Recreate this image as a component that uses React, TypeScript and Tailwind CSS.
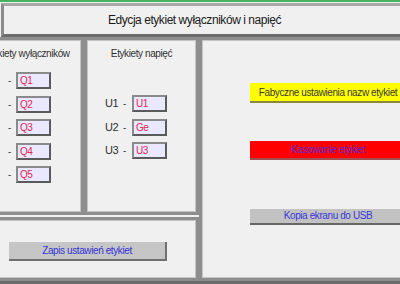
export default function App() {
  const qLabels = ['Q1', 'Q2', 'Q3', 'Q4', 'Q5']
  const uRows = [
    { name: 'U1', value: 'U1' },
    { name: 'U2', value: 'Ge' },
    { name: 'U3', value: 'U3' },
  ]

  return (
    <div className="w-[400px] h-[284px] overflow-hidden bg-[#f0f0f0] flex flex-col font-['Liberation_Sans',Arial,sans-serif] text-[#303030]">
      {/* top status strip */}
      <div className="h-[2px] shrink-0 bg-[#46b45e]" />

      {/* title */}
      <div className="mt-px ml-[1px] -mr-[10px] h-[34px] shrink-0 flex items-center border-[3px] border-t-[#a8a8a8] border-l-[#8c8c8c] border-b-[#6c6c6c] border-r-[#6c6c6c] bg-[#f0f0f0]">
        <div className="pl-[104px] text-[12px] tracking-[-0.45px] whitespace-nowrap text-[#1a1a1a]">
          Edycja etykiet wyłączników i napięć
        </div>
      </div>

      <div className="flex flex-1 min-h-0">
        {/* left column */}
        <div className="-ml-[30px] w-[229px] shrink-0 flex flex-col">
          <div className="flex h-[178px] shrink-0">
            {/* breakers */}
            <div className="w-[114px] border-[3px] border-[#8e8e8e] shadow-[inset_0_0_0_1px_#c4c4c4] flex flex-col items-center pt-[7px]">
              <div className="text-[10px] leading-[13px] tracking-[-0.4px] whitespace-nowrap text-[#303030]">
                Etykiety wyłączników
              </div>
              <div className="mt-[12px] w-full flex flex-col gap-[6.5px] pl-[35px]">
                {qLabels.map((q) => (
                  <div key={q} className="flex items-center h-[17px]">
                    <span className="w-[8px] text-[10px] text-[#404040]">-</span>
                    <div className="w-[35px] h-[17px] border-2 border-t-[#8a8a8a] border-l-[#8a8a8a] border-b-[#5a5a5a] border-r-[#5a5a5a] bg-[#e9e8ff] pl-[2px] flex items-center text-[10px] tracking-[-0.5px] text-[#e02850]">
                      {q}
                    </div>
                  </div>
                ))}
              </div>
            </div>

            {/* voltages */}
            <div className="w-[115px] border-[3px] border-[#8e8e8e] shadow-[inset_0_0_0_1px_#c4c4c4] flex flex-col items-center pt-[7px]">
              <div className="text-[10px] leading-[13px] tracking-[-0.4px] whitespace-nowrap text-[#303030]">
                Etykiety napięć
              </div>
              <div className="mt-[35px] w-full flex flex-col gap-[6.5px] pl-[18px]">
                {uRows.map((u) => (
                  <div key={u.name} className="flex items-center h-[17px]">
                    <span className="w-[18px] text-[11px] tracking-[-0.4px] text-[#303030]">{u.name}</span>
                    <span className="w-[9px] text-[10px] text-[#404040]">-</span>
                    <div className="w-[35px] h-[17px] border-2 border-t-[#8a8a8a] border-l-[#8a8a8a] border-b-[#5a5a5a] border-r-[#5a5a5a] bg-[#e9e8ff] pl-[2px] flex items-center text-[10px] tracking-[-0.5px] text-[#e02850]">
                      {u.value}
                    </div>
                  </div>
                ))}
              </div>
            </div>
          </div>

          {/* save panel */}
          <div className="flex-1 mt-[2px] border-[3px] border-[#8e8e8e] shadow-[inset_0_0_0_1px_#c4c4c4] pl-[36px] pt-[17px]">
            <button className="w-[158px] h-[19px] bg-[#c6c6c6] border-b-2 border-r-2 border-[#707070] text-[10px] tracking-[-0.4px] whitespace-nowrap text-[#3434d4]">
              Zapis ustawień etykiet
            </button>
          </div>
        </div>

        {/* right panel */}
        <div className="flex-1 -mr-[10px] border-[3px] border-[#8e8e8e] shadow-[inset_0_0_0_1px_#c4c4c4] flex flex-col pl-[48px] pt-[43px]">
          <button className="w-[156px] h-[20px] bg-[#ffff00] border-b-2 border-[#8a8a3a] text-[10px] tracking-[-0.4px] whitespace-nowrap text-[#3a3a3a]">
            Fabyczne ustawienia nazw etykiet
          </button>
          <button className="mt-[38px] w-[156px] h-[19px] bg-[#ff0000] border-b-2 border-[#a05050] text-[10px] tracking-[-0.4px] whitespace-nowrap text-[#5a2ad0]">
            Kasowanie etykiet
          </button>
          <button className="mt-[49px] w-[156px] h-[16px] bg-[#c2c2c2] border-b-2 border-[#666666] text-[10px] tracking-[-0.4px] leading-[12px] whitespace-nowrap text-[#3838dc]">
            Kopia ekranu do USB
          </button>
        </div>
      </div>

      <div className="h-[3px] shrink-0 bg-[#6a6a6a]" />
    </div>
  )
}
